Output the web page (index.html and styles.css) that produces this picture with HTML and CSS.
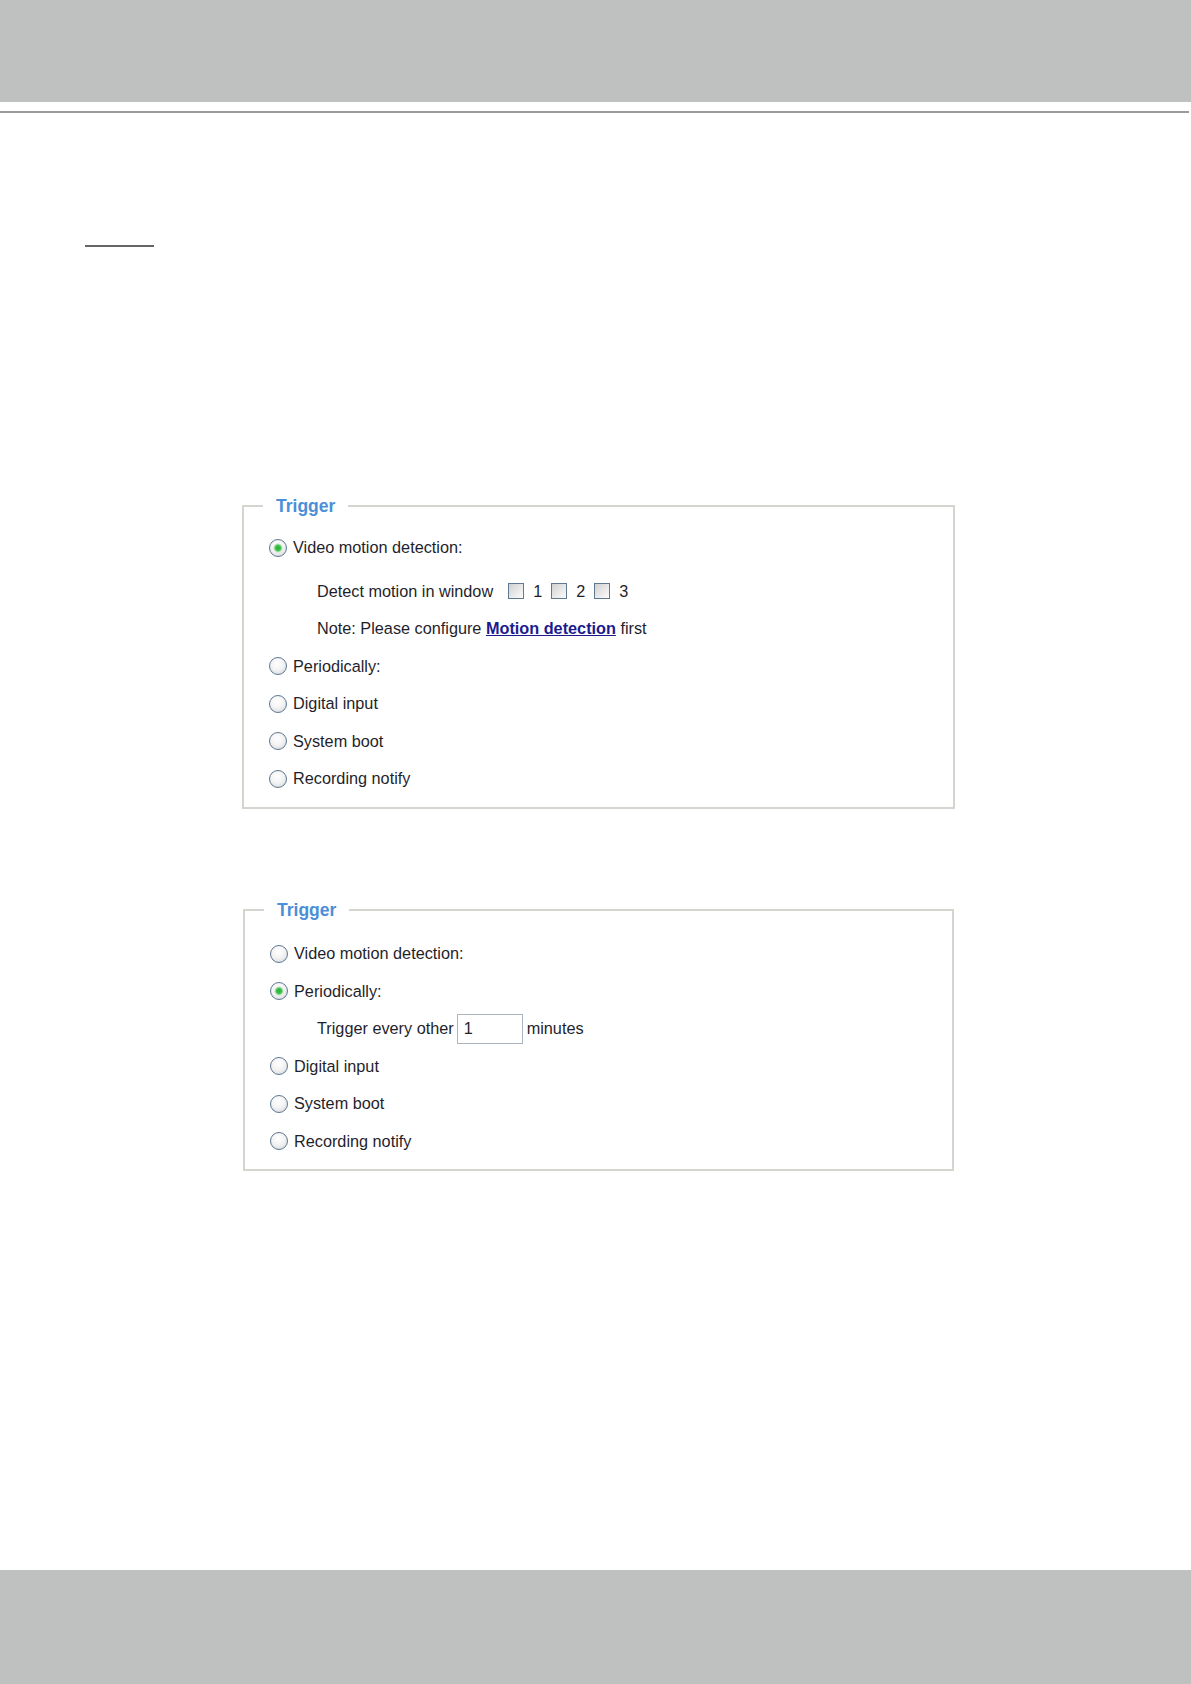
FILE: index.html
```html
<!DOCTYPE html>
<html lang="en">
  <head>
    <meta charset="UTF-8" />
    <meta name="viewport" content="width=device-width, initial-scale=1.0" />
    <title>Event Settings - Trigger</title>
    <link rel="stylesheet" href="styles.css">
  </head>
  <body>
    <div class="page">
      <header class="top-bar"></header>
      <hr class="top-rule" />

      <main class="content">
        <div class="section-mark"></div>

        <fieldset class="trigger-box trigger-box-first">
          <legend>Trigger</legend>
          <div class="option"><span class="radio checked"></span>Video motion detection:</div>
          <div class="sub-option detect-row">
            Detect motion in window
            <span class="checkbox first"></span><span class="check-label">1</span>
            <span class="checkbox"></span><span class="check-label">2</span>
            <span class="checkbox"></span><span class="check-label">3</span>
          </div>
          <div class="sub-option">
            Note: Please configure&nbsp;<a href="#" class="link">Motion detection</a>&nbsp;first
          </div>
          <div class="option"><span class="radio"></span>Periodically:</div>
          <div class="option"><span class="radio"></span>Digital input</div>
          <div class="option"><span class="radio"></span>System boot</div>
          <div class="option"><span class="radio"></span>Recording notify</div>
        </fieldset>

        <fieldset class="trigger-box trigger-box-second">
          <legend>Trigger</legend>
          <div class="option"><span class="radio"></span>Video motion detection:</div>
          <div class="option"><span class="radio checked"></span>Periodically:</div>
          <div class="sub-option trigger-row">
            Trigger every other
            <input type="text" class="minutes-input" value="1" />
            minutes
          </div>
          <div class="option"><span class="radio"></span>Digital input</div>
          <div class="option"><span class="radio"></span>System boot</div>
          <div class="option"><span class="radio"></span>Recording notify</div>
        </fieldset>
      </main>

      <footer class="bottom-bar"></footer>
    </div>
  </body>
</html>
```

FILE: styles.css
```css
* {
  margin: 0;
  padding: 0;
  box-sizing: border-box;
}

body {
  font-family: "Liberation Sans", Arial, sans-serif;
  font-size: 16.25px;
  color: #1f1f2c;
  background: #ffffff;
}

.page {
  min-height: 100vh;
  display: flex;
  flex-direction: column;
}

.top-bar {
  height: 102px;
  background: #bfc1c0;
}

.top-rule {
  border: 0;
  height: 2px;
  width: 1189px;
  margin-top: 9px;
  background: #9b9b9b;
}

.content {
  flex: 1;
}

.section-mark {
  width: 69px;
  margin: 132px 0 0 85px;
  border-bottom: 2px solid #666666;
}

/* Trigger boxes */
.trigger-box {
  width: 713px;
  margin-left: 242px;
  border: 2px solid #d6d4ce;
  padding: 0 0 9.5px;
  min-inline-size: 0;
}

.trigger-box-first {
  margin-top: 249px;
  padding-top: 13px;
}

.trigger-box-second {
  width: 711px;
  margin-left: 243px;
  margin-top: 91px;
  padding-top: 15px;
  padding-bottom: 9px;
}

.trigger-box legend {
  margin-left: 19px;
  padding: 0 13px;
  font-size: 17.5px;
  line-height: 20px;
  font-weight: bold;
  color: #4a8fd8;
}

.option {
  display: flex;
  align-items: center;
  height: 37.5px;
  padding-left: 25px;
}

.sub-option {
  display: flex;
  align-items: center;
  height: 37.5px;
  padding-left: 73px;
  white-space: nowrap;
}

.detect-row {
  margin-top: 6px;
}

.trigger-row {
  padding-left: 72px;
}

.radio {
  width: 18px;
  height: 18px;
  flex-shrink: 0;
  margin-right: 6px;
  border-radius: 50%;
  border: 1.5px solid #5e7791;
  background: radial-gradient(circle at 45% 35%, #ffffff 0%, #f4f4f4 45%, #d0d3d7 100%);
}

.radio.checked {
  background: radial-gradient(circle at 50% 50%, #22b233 0, #3cbf4a 2.5px, #b9e6bd 4px, rgba(255, 255, 255, 0) 5px),
    radial-gradient(circle at 45% 35%, #ffffff 0%, #f4f4f4 45%, #d0d3d7 100%);
}

.checkbox {
  width: 16px;
  height: 16px;
  flex-shrink: 0;
  margin-left: 9px;
  border: 1px solid #5f7992;
  background: linear-gradient(135deg, #d0d0d0 0%, #e9e9e9 55%, #fbfbfb 100%);
}

.checkbox.first {
  margin-left: 15px;
}

.check-label {
  margin-left: 9px;
}

.link {
  color: #1b1b8e;
  font-weight: bold;
  text-decoration: underline;
}

.minutes-input {
  width: 66px;
  height: 30px;
  margin: 0 4px 0 3px;
  padding: 0 6px;
  border: 1px solid #abb5c0;
  font-family: "Liberation Sans", Arial, sans-serif;
  font-size: 16.25px;
  color: #1f1f2c;
  background: #ffffff;
}

.bottom-bar {
  height: 114px;
  background: #bfc1c0;
}
```
